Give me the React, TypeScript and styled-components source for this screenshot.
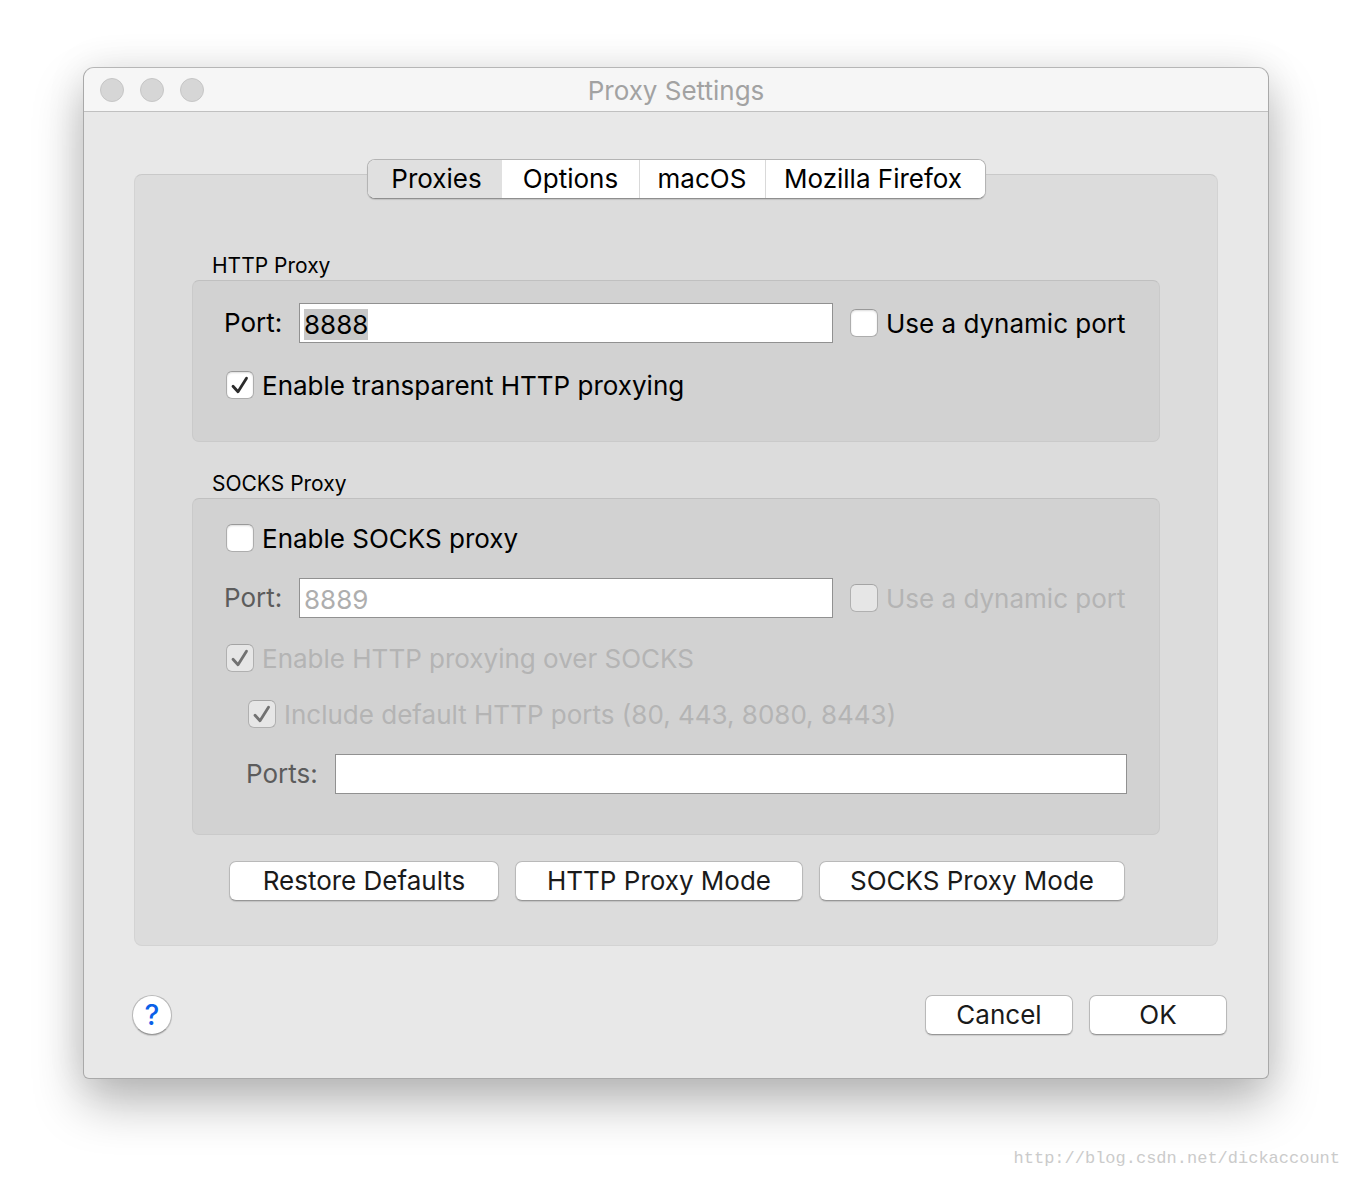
import React, { useEffect, useRef, useState } from "react";
import styled, { createGlobalStyle, css } from "styled-components";

const GlobalStyle = createGlobalStyle`
  *, *::before, *::after { box-sizing: border-box; }
  body {
    margin: 0;
    background: #ffffff;
    color: #000000;
    font-family: Inter, "Liberation Sans", sans-serif;
    font-size: 26px;
    line-height: 32px;
  }
  button, input { font: inherit; color: inherit; }
`;

const Desktop = styled.div`
  min-height: 100vh;
  display: flex;
  flex-direction: column;
  padding: 67px 83px 0;
`;

const Dialog = styled.main`
  border: 1px solid #a9a9a9;
  border-top-color: #b6b6b6;
  border-radius: 11px 11px 6px 6px;
  background: #e8e8e8;
  box-shadow: 0 24px 50px rgba(0, 0, 0, 0.28), 0 0 40px rgba(0, 0, 0, 0.08);
`;

const TitleBar = styled.header`
  display: grid;
  grid-template-columns: 1fr auto 1fr;
  align-items: center;
  height: 44px;
  padding: 0 16px;
  border-bottom: 1px solid #c0c0c0;
  border-radius: 10px 10px 0 0;
  background: #f6f6f6;
`;

const Lights = styled.div`
  display: flex;
  gap: 16px;
`;

const Light = styled.button`
  width: 24px;
  height: 24px;
  padding: 0;
  border: 1px solid #c6c6c6;
  border-radius: 50%;
  background: #d6d6d6;
`;

const Title = styled.h1`
  margin: 0;
  padding-top: 2px;
  color: #a2a2a2;
  font-size: 26px;
  font-weight: 400;
`;

const Body = styled.div`
  padding: 47px 50px 0;
`;

const TabList = styled.div`
  position: relative;
  z-index: 1;
  display: flex;
  width: fit-content;
  height: 40px;
  margin: 0 auto;
  overflow: hidden;
  border: 1px solid #b4b4b4;
  border-bottom-color: #8f8f8f;
  border-radius: 8px;
  background: #ffffff;
  box-shadow: 0 1px 1px rgba(0, 0, 0, 0.12);
`;

const Tab = styled.button<{ $width: number }>`
  min-width: ${(p) => p.$width}px;
  padding: 0;
  border: 0;
  border-left: 1px solid #d9d9d9;
  background: #ffffff;
  text-align: center;

  &:first-child {
    padding-left: 4px;
    border-left: 0;
  }
  &:last-child { padding-right: 4px; }
  &[aria-selected="true"] { background: #e0e0e0; }
  &[aria-selected="true"] + & { border-left-color: #ffffff; }
`;

const Panel = styled.section`
  margin-top: -25px;
  padding: 77px 57px 44px;
  border: 1px solid #d3d3d3;
  border-top-color: #c9c9c9;
  border-radius: 8px;
  background: #dcdcdc;
`;

const Group = styled.section`
  & + & { margin-top: 28px; }
`;

const GroupTitle = styled.h2`
  margin: 0;
  padding-left: 20px;
  font-size: 21px;
  font-weight: 400;
  line-height: 28px;
`;

const GroupBox = styled.div<{ $gap: number; $top: number }>`
  display: flex;
  flex-direction: column;
  gap: ${(p) => p.$gap}px;
  padding: ${(p) => p.$top}px 32px 40px 31px;
  border: 1px solid #cacaca;
  border-top-color: #c0c0c0;
  border-radius: 7px;
  background: #d2d2d2;
`;

const Row = styled.div<{ $indent?: boolean }>`
  display: flex;
  align-items: center;
  padding-left: ${(p) => (p.$indent ? 22 : 0)}px;
`;

const FieldLabel = styled.label<{ $width: number; $dim?: boolean }>`
  flex: 0 0 ${(p) => p.$width}px;
  color: ${(p) => (p.$dim ? "#5c5c5c" : "#000000")};
`;

const Field = styled.input`
  flex: 1;
  min-width: 0;
  height: 40px;
  padding: 2px 4px 0;
  border: 1px solid #919191;
  border-radius: 0;
  outline: 0;
  background: #ffffff;

  &::selection { background: #c8c8c8; color: #000000; }
  &:disabled { color: #aeaeae; }
`;

const CheckLabel = styled.label<{ $dim?: boolean; $side?: boolean }>`
  display: flex;
  align-items: center;
  gap: 8px;
  height: 32px;
  padding-left: 2px;
  white-space: nowrap;
  color: ${(p) => (p.$dim ? "#b4b4b4" : "#000000")};
  ${(p) =>
    p.$side &&
    css`
      flex: 0 0 279px;
      margin-left: 15px;
    `}
`;

const CheckText = styled.span`
  padding-top: 2px;
`;

const TickBox = styled.span`
  display: grid;
  width: 28px;
  height: 28px;

  > * { grid-area: 1 / 1; }
`;

const TickInput = styled.input`
  appearance: none;
  width: 28px;
  height: 28px;
  margin: 0;
  border: 1px solid #adadad;
  border-top-color: #999999;
  border-radius: 6px;
  background: #ffffff;
  box-shadow: inset 0 1px 2px rgba(0, 0, 0, 0.14);

  &:disabled {
    border-color: #b0b0b0;
    border-top-color: #a4a4a4;
    background: #e6e6e6;
    box-shadow: none;
  }
  & + svg { visibility: hidden; pointer-events: none; }
  &:checked + svg { visibility: visible; }
`;

const PushButton = styled.button<{ $width: number }>`
  min-width: ${(p) => p.$width}px;
  height: 40px;
  padding: 0 16px;
  border: 1px solid #b9b9b9;
  border-bottom-color: #979797;
  border-radius: 7px;
  background: #ffffff;
  box-shadow: 0 1px 1px rgba(0, 0, 0, 0.12);
  color: #1a1a1a;
  white-space: nowrap;
`;

const Actions = styled.div`
  display: flex;
  justify-content: center;
  gap: 16px;
  margin-top: 26px;
  padding-left: 2px;
`;

const Footer = styled.footer`
  display: flex;
  align-items: center;
  gap: 16px;
  padding: 49px 41px 43px 48px;
`;

const HelpButton = styled.button`
  display: grid;
  place-items: center;
  width: 40px;
  height: 40px;
  margin-right: auto;
  padding: 0;
  border: 1px solid #b9b9b9;
  border-bottom-color: #979797;
  border-radius: 50%;
  background: #ffffff;
  box-shadow: 0 1px 1px rgba(0, 0, 0, 0.15);
  color: #0a60e8;
  font-size: 28px;
  font-weight: 500;
`;

const SourceLink = styled.a`
  align-self: flex-end;
  margin: 68px -71px 0 0;
  color: #cbcbcb;
  font-family: "Liberation Mono", monospace;
  font-size: 17px;
  line-height: 24px;
  text-decoration: none;
`;

type CheckProps = {
  text: string;
  checked?: boolean;
  disabled?: boolean;
  side?: boolean;
};

function Check({ text, checked, disabled, side }: CheckProps) {
  return (
    <CheckLabel $dim={disabled} $side={side}>
      <TickBox>
        <TickInput type="checkbox" defaultChecked={checked} disabled={disabled} />
        <svg width="28" height="28" viewBox="0 0 28 28" fill="none" aria-hidden="true">
          <path
            d="M7 15.2 L12 20.8 L20.5 7.2"
            stroke={disabled ? "#727272" : "#2b2b2b"}
            strokeWidth="2.8"
            strokeLinecap="round"
            strokeLinejoin="round"
          />
        </svg>
      </TickBox>
      <CheckText>{text}</CheckText>
    </CheckLabel>
  );
}

const TABS = [
  { name: "Proxies", width: 134 },
  { name: "Options", width: 137 },
  { name: "macOS", width: 126 },
  { name: "Mozilla Firefox", width: 220 },
];

export default function App() {
  const [tab, setTab] = useState("Proxies");
  const port = useRef<HTMLInputElement>(null);

  useEffect(() => {
    port.current?.focus();
    port.current?.select();
  }, []);

  return (
    <>
      <GlobalStyle />
      <Desktop>
        <Dialog>
          <TitleBar>
            <Lights>
              <Light aria-label="Close" />
              <Light aria-label="Minimize" />
              <Light aria-label="Zoom" />
            </Lights>
            <Title>Proxy Settings</Title>
          </TitleBar>
          <Body>
            <TabList role="tablist">
              {TABS.map((t) => (
                <Tab
                  key={t.name}
                  role="tab"
                  $width={t.width}
                  aria-selected={tab === t.name}
                  onClick={() => setTab(t.name)}
                >
                  {t.name}
                </Tab>
              ))}
            </TabList>
            <Panel role="tabpanel">
              <Group>
                <GroupTitle>HTTP Proxy</GroupTitle>
                <GroupBox $gap={26} $top={22}>
                  <Row>
                    <FieldLabel htmlFor="http-port" $width={75}>Port:</FieldLabel>
                    <Field id="http-port" ref={port} defaultValue="8888" />
                    <Check text="Use a dynamic port" side />
                  </Row>
                  <Check text="Enable transparent HTTP proxying" checked />
                </GroupBox>
              </Group>
              <Group>
                <GroupTitle>SOCKS Proxy</GroupTitle>
                <GroupBox $gap={24} $top={23}>
                  <Check text="Enable SOCKS proxy" />
                  <Row>
                    <FieldLabel htmlFor="socks-port" $width={75} $dim>Port:</FieldLabel>
                    <Field id="socks-port" defaultValue="8889" disabled />
                    <Check text="Use a dynamic port" disabled side />
                  </Row>
                  <Check text="Enable HTTP proxying over SOCKS" checked disabled />
                  <Row $indent>
                    <Check text="Include default HTTP ports (80, 443, 8080, 8443)" checked disabled />
                  </Row>
                  <Row $indent>
                    <FieldLabel htmlFor="socks-ports" $width={89} $dim>Ports:</FieldLabel>
                    <Field id="socks-ports" disabled />
                  </Row>
                </GroupBox>
              </Group>
              <Actions>
                <PushButton $width={270}>Restore Defaults</PushButton>
                <PushButton $width={288}>HTTP Proxy Mode</PushButton>
                <PushButton $width={306}>SOCKS Proxy Mode</PushButton>
              </Actions>
            </Panel>
          </Body>
          <Footer>
            <HelpButton aria-label="Help">?</HelpButton>
            <PushButton $width={148}>Cancel</PushButton>
            <PushButton $width={138}>OK</PushButton>
          </Footer>
        </Dialog>
        <SourceLink href="http://blog.csdn.net/dickaccount">http://blog.csdn.net/dickaccount</SourceLink>
      </Desktop>
    </>
  );
}
